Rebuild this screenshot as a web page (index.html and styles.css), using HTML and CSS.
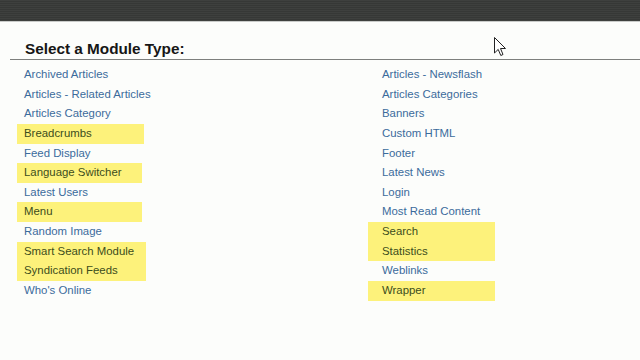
FILE: index.html
```html
<!DOCTYPE html>
<html>
<head>
<meta charset="utf-8">
<link rel="stylesheet" href="styles.css">
</head>
<body>
<div class="topbar"></div>
<main class="panel">
  <h2 class="title">Select a Module Type:</h2>
  <div class="cols">
    <ul class="col">
      <li>Archived Articles</li>
      <li>Articles - Related Articles</li>
      <li>Articles Category</li>
      <li class="hl">Breadcrumbs</li>
      <li>Feed Display</li>
      <li class="hl narrow">Language Switcher</li>
      <li>Latest Users</li>
      <li class="hl narrow">Menu</li>
      <li>Random Image</li>
      <li class="hl wide">Smart Search Module</li>
      <li class="hl wide">Syndication Feeds</li>
      <li>Who's Online</li>
    </ul>
    <ul class="col right">
      <li>Articles - Newsflash</li>
      <li>Articles Categories</li>
      <li>Banners</li>
      <li>Custom HTML</li>
      <li>Footer</li>
      <li>Latest News</li>
      <li>Login</li>
      <li>Most Read Content</li>
      <li class="hl">Search</li>
      <li class="hl">Statistics</li>
      <li>Weblinks</li>
      <li class="hl">Wrapper</li>
    </ul>
  </div>
</main>
<svg class="cursor" width="13" height="20" viewBox="0 0 13 20" xmlns="http://www.w3.org/2000/svg">
  <path d="M0.5 0.5 L0.5 16 L4.2 12.4 L6.8 18.5 L9 17.5 L6.5 11.5 L11.5 11.5 Z" fill="#ffffff" stroke="#222222" stroke-width="1" stroke-linejoin="round"/>
</svg>
</body>
</html>
```
FILE: styles.css
```css
html, body {
  margin: 0;
  padding: 0;
}
body {
  width: 640px;
  height: 360px;
  background: #fcfdfb;
  font-family: "Liberation Sans", Arial, sans-serif;
  position: relative;
  overflow: hidden;
}
.topbar {
  height: 21px;
  background: repeating-linear-gradient(to bottom, #3e403e 0px, #3e403e 1px, #363836 1px, #363836 2px);
  border-bottom: 1px solid #c9cbc9;
}
.panel {
  padding: 0;
}
.title {
  margin: 18px 0 0 10px;
  padding: 0 0 1px 15px;
  font-size: 15.3px;
  line-height: 18px;
  font-weight: bold;
  color: #161616;
  border-bottom: 1px solid #7d7f7d;
}
.cols {
  display: grid;
  grid-template-columns: 358px 1fr;
  padding-left: 24px;
  margin-top: 5px;
}
.col {
  list-style: none;
  margin: 0;
  padding: 0;
}
.col li {
  font-size: 11.4px;
  line-height: 19.64px;
  color: #3b6b9b;
  white-space: nowrap;
}
.col li.hl {
  background: #fdf27b;
  color: #3c4d1c;
  margin-left: -7px;
  padding-left: 7px;
  width: 127px;
  box-sizing: border-box;
}
.col li.hl.narrow {
  width: 125px;
}
.col li.hl.wide {
  width: 129px;
}
.right li.hl {
  margin-left: -14px;
  padding-left: 14px;
  width: 127px;
}
.cursor {
  position: absolute;
  left: 494px;
  top: 37px;
}
```
